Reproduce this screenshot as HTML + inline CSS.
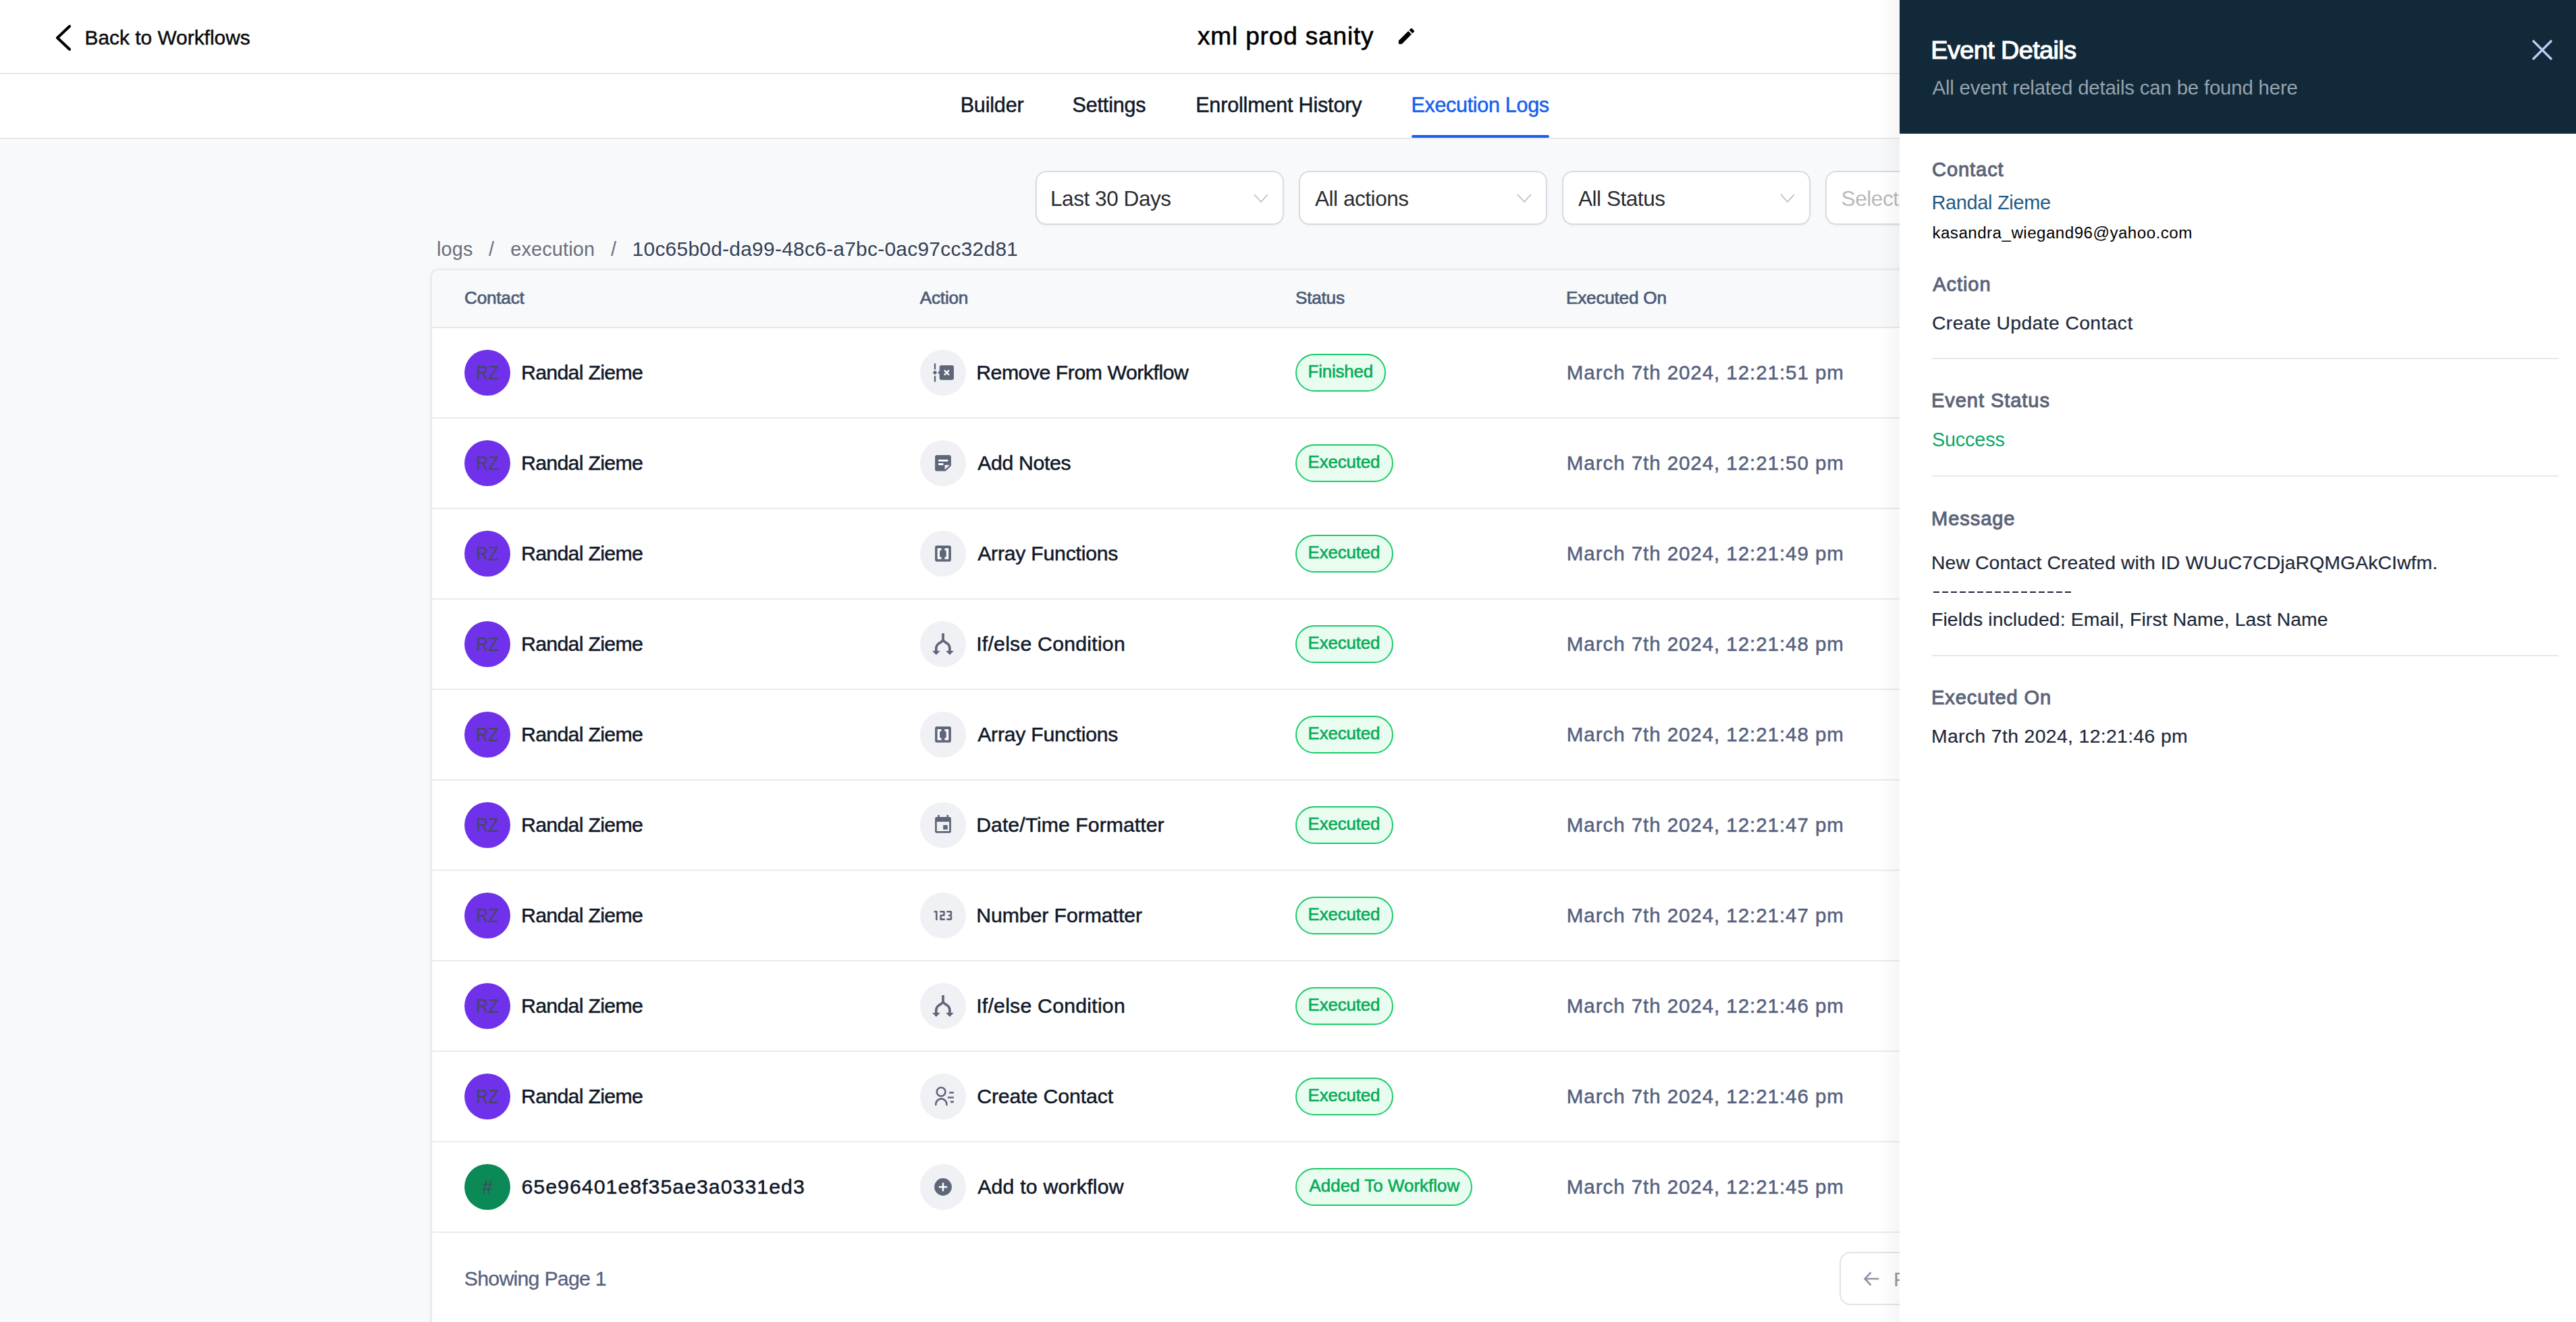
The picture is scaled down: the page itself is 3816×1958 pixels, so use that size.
<!DOCTYPE html>
<html><head><meta charset="utf-8"><title>Execution Logs</title>
<style>
html,body{margin:0;padding:0;width:3816px;height:1958px;overflow:hidden;background:#f8f9fb;font-family:"Liberation Sans",sans-serif;position:relative}
.t{position:absolute;white-space:nowrap}
.a{position:absolute}
.rowb{position:absolute;left:640px;width:2200px;height:2px;background:#e8eaee}
.av{position:absolute;left:688px;width:68px;height:68px;border-radius:50%}
.ic{position:absolute;left:1363px;width:68px;height:68px;border-radius:50%;background:#f0f1f4}
.ic svg{display:block}
.badge{position:absolute;left:1919px;height:52px;border:2px solid #1ccb68;background:#e8fcf0;border-radius:28px}
.sel{position:absolute;top:253px;width:364px;height:76px;border:2px solid #d9dbe2;border-radius:16px;background:#fff;box-shadow:0 2px 3px rgba(16,24,40,0.04)}
.chev{position:absolute;top:286px}
.pdiv{position:absolute;left:2862px;width:928px;height:2px;background:#e6e8ec}
</style></head><body>
<div class="a" style="left:0;top:0;width:3816px;height:108px;background:#fff;border-bottom:2px solid #e6e8ec"></div>
<div class="a" style="left:0;top:110px;width:3816px;height:94px;background:#fff;border-bottom:2px solid #e6e8ec"></div>
<div class="a" style="left:2091px;top:200px;width:204px;height:4px;background:#155eef;border-radius:2px"></div>
<svg class="a" style="left:80px;top:34px" width="30" height="44" viewBox="0 0 30 44"><path d="M23 5 L5 22 L23 39" stroke="#000" stroke-width="4.2" fill="none" stroke-linecap="round" stroke-linejoin="round"/></svg>
<svg class="a" style="left:2068px;top:38px" width="31" height="31" viewBox="0 0 24 24"><path fill="#000" d="M3 17.25V21h3.75L17.81 9.94l-3.75-3.75L3 17.25zM20.71 7.04a.996.996 0 000-1.41l-2.34-2.34a.996.996 0 00-1.41 0l-1.83 1.83 3.75 3.75 1.83-1.83z"/></svg>
<div class="sel" style="left:1534px"></div>
<div class="sel" style="left:1924px"></div>
<div class="sel" style="left:2314px"></div>
<div class="sel" style="left:2704px"></div>
<svg class="chev" style="left:1856px" width="24" height="16" viewBox="0 0 24 16"><path d="M2 2 L12 13 L22 2" stroke="#bcbec4" stroke-width="1.8" fill="none"/></svg>
<svg class="chev" style="left:2246px" width="24" height="16" viewBox="0 0 24 16"><path d="M2 2 L12 13 L22 2" stroke="#bcbec4" stroke-width="1.8" fill="none"/></svg>
<svg class="chev" style="left:2636px" width="24" height="16" viewBox="0 0 24 16"><path d="M2 2 L12 13 L22 2" stroke="#bcbec4" stroke-width="1.8" fill="none"/></svg>
<div class="a" style="left:638px;top:398px;width:2400px;height:1700px;border:2px solid #e6e8ec;border-radius:12px;background:#fff;box-shadow:0 1px 6px rgba(16,24,40,0.06);overflow:hidden">
  <div class="a" style="left:0;top:0;width:2400px;height:84px;background:#f8f9fb;border-bottom:2px solid #e6e8ec"></div>
</div>
<div class="rowb" style="top:618px"></div>
<div class="av" style="top:518px;background:#6f31ea"></div>
<div class="ic" style="top:518px"><svg width="68" height="68" viewBox="0 0 68 68"><line x1="22" y1="21.2" x2="22" y2="28.3" stroke="#5e667a" stroke-width="2.4" stroke-linecap="round"/>
<line x1="22" y1="39.6" x2="22" y2="46.6" stroke="#5e667a" stroke-width="2.4" stroke-linecap="round"/>
<circle cx="22" cy="33.8" r="2.6" fill="#5e667a"/>
<path d="M31.6 22.9 H47 Q50 22.9 50 25.9 V41.8 Q50 44.8 47 44.8 H31.6 Q28.7 44.8 28.7 41.8 V36.3 L26.2 33.8 L28.7 31.3 V25.9 Q28.7 22.9 31.6 22.9 Z" fill="#5e667a"/>
<path d="M35.9 30.4 L43 37.5 M43 30.4 L35.9 37.5" stroke="#fff" stroke-width="2.4" stroke-linecap="butt"/></svg></div>
<div class="badge" style="top:524px;width:130px"></div>
<div class="rowb" style="top:752px"></div>
<div class="av" style="top:652px;background:#6f31ea"></div>
<div class="ic" style="top:652px"><svg width="68" height="68" viewBox="0 0 68 68"><path d="M25 22.1 H43 Q45.9 22.1 45.9 25 V37.8 L37.8 45.8 H25 Q22.1 45.8 22.1 42.9 V25 Q22.1 22.1 25 22.1 Z" fill="#5e667a"/>
<path d="M28.2 30.1 H40.3 M28.2 35.5 H33.4" stroke="#fff" stroke-width="2.8" stroke-linecap="round"/>
<path d="M36.6 36.8 H43.8 L36.6 43.6 Z" fill="#fff"/></svg></div>
<div class="badge" style="top:658px;width:141px"></div>
<div class="rowb" style="top:886px"></div>
<div class="av" style="top:786px;background:#6f31ea"></div>
<div class="ic" style="top:786px"><svg width="68" height="68" viewBox="0 0 68 68"><rect x="22.1" y="22.1" width="23.8" height="23.6" rx="2.6" fill="#5e667a"/>
<rect x="25.7" y="26" width="16.5" height="16.2" fill="#fff"/>
<rect x="31.4" y="26" width="5.1" height="16.2" fill="#5e667a"/>
<rect x="29" y="29.3" width="9.8" height="9.5" fill="#5e667a"/></svg></div>
<div class="badge" style="top:792px;width:141px"></div>
<div class="rowb" style="top:1020px"></div>
<div class="av" style="top:920px;background:#6f31ea"></div>
<div class="ic" style="top:920px"><svg width="68" height="68" viewBox="0 0 68 68"><path d="M34 18 V27 C34 29.5 31 31 28.5 32.5 C25.4 34.4 23.8 36.6 23.8 40.5 V45.5 M34 27 C34 29.5 37 31 39.5 32.5 C42.6 34.4 43.9 36.6 43.9 40.5 V45.5" stroke="#5e667a" stroke-width="3.7" fill="none"/>
<path d="M18 44.1 H29.7 L23.85 50 Z M38.1 44.1 H49.8 L43.95 50 Z" fill="#5e667a"/></svg></div>
<div class="badge" style="top:926px;width:141px"></div>
<div class="rowb" style="top:1154px"></div>
<div class="av" style="top:1054px;background:#6f31ea"></div>
<div class="ic" style="top:1054px"><svg width="68" height="68" viewBox="0 0 68 68"><rect x="22.1" y="22.1" width="23.8" height="23.6" rx="2.6" fill="#5e667a"/>
<rect x="25.7" y="26" width="16.5" height="16.2" fill="#fff"/>
<rect x="31.4" y="26" width="5.1" height="16.2" fill="#5e667a"/>
<rect x="29" y="29.3" width="9.8" height="9.5" fill="#5e667a"/></svg></div>
<div class="badge" style="top:1060px;width:141px"></div>
<div class="rowb" style="top:1288px"></div>
<div class="av" style="top:1188px;background:#6f31ea"></div>
<div class="ic" style="top:1188px"><svg width="68" height="68" viewBox="0 0 68 68"><rect x="22.1" y="22.1" width="23.8" height="23.6" rx="2.6" fill="#5e667a"/>
<rect x="24.8" y="29.1" width="18.3" height="13.9" fill="#f0f1f4"/>
<rect x="34.2" y="34" width="6.5" height="6.6" fill="#5e667a"/>
<rect x="26.2" y="19" width="2.6" height="4" fill="#5e667a"/>
<rect x="39.4" y="19" width="2.6" height="4" fill="#5e667a"/></svg></div>
<div class="badge" style="top:1194px;width:141px"></div>
<div class="rowb" style="top:1422px"></div>
<div class="av" style="top:1322px;background:#6f31ea"></div>
<div class="ic" style="top:1322px"><svg width="68" height="68" viewBox="0 0 68 68"><path d="M20.6 27 H25.6 V40.9 H23 V29.6 H20.6 Z" fill="#5e667a"/>
<path d="M29.3 27 H35 Q36.8 27 36.8 28.8 V33.3 Q36.8 35 35 35 H31.9 V38.3 H36.8 V40.9 H29.3 V34.2 Q29.3 32.4 31.1 32.4 H34.2 V29.6 H29.3 Z" fill="#5e667a"/>
<path d="M39.4 27 H45.5 Q47.3 27 47.3 28.8 V32.6 L46.5 33.9 L47.3 35.2 V39.1 Q47.3 40.9 45.5 40.9 H39.4 V38.3 H44.7 V35.2 H42.2 V32.6 H44.7 V29.6 H39.4 Z" fill="#5e667a"/></svg></div>
<div class="badge" style="top:1328px;width:141px"></div>
<div class="rowb" style="top:1556px"></div>
<div class="av" style="top:1456px;background:#6f31ea"></div>
<div class="ic" style="top:1456px"><svg width="68" height="68" viewBox="0 0 68 68"><path d="M34 18 V27 C34 29.5 31 31 28.5 32.5 C25.4 34.4 23.8 36.6 23.8 40.5 V45.5 M34 27 C34 29.5 37 31 39.5 32.5 C42.6 34.4 43.9 36.6 43.9 40.5 V45.5" stroke="#5e667a" stroke-width="3.7" fill="none"/>
<path d="M18 44.1 H29.7 L23.85 50 Z M38.1 44.1 H49.8 L43.95 50 Z" fill="#5e667a"/></svg></div>
<div class="badge" style="top:1462px;width:141px"></div>
<div class="rowb" style="top:1690px"></div>
<div class="av" style="top:1590px;background:#6f31ea"></div>
<div class="ic" style="top:1590px"><svg width="68" height="68" viewBox="0 0 68 68"><circle cx="31.1" cy="27.1" r="6.4" stroke="#5e667a" stroke-width="2.6" fill="none"/>
<path d="M23.3 46.2 V45.4 A8.05 8.05 0 0 1 39.4 45.4 V46.2" stroke="#5e667a" stroke-width="2.6" fill="none" stroke-linecap="round"/>
<path d="M43.2 28.3 H49.9 M40.9 35.5 H49.9 M45 41.9 H49.9" stroke="#5e667a" stroke-width="2.6"/></svg></div>
<div class="badge" style="top:1596px;width:141px"></div>
<div class="rowb" style="top:1824px"></div>
<div class="av" style="top:1724px;background:#0b8a58"></div>
<div class="ic" style="top:1724px"><svg width="68" height="68" viewBox="0 0 68 68"><circle cx="34" cy="34" r="12.9" fill="#5e667a"/>
<path d="M27.8 34 H40.2 M34 27.8 V40.2" stroke="#fff" stroke-width="2.5"/></svg></div>
<div class="badge" style="top:1730px;width:258px"></div>
<div class="a" style="left:2725px;top:1854px;width:300px;height:75px;border:2px solid #e0e3e8;border-radius:16px;background:#fff"></div>
<svg class="a" style="left:2758px;top:1880px" width="30" height="28" viewBox="0 0 30 28"><path d="M25.4 14 H5 M13.5 4.5 L4.5 14 L13.5 23.5" stroke="#8d95a4" stroke-width="2.6" fill="none"/></svg>
<span class="t" style="left:2805px;top:1880px;font-size:30px;line-height:30px;color:#8d95a4">Previous</span>
<span class="t" style="left:125.60px;top:41.20px;font-size:29.80px;line-height:29.80px;color:#0c0c0d;letter-spacing:0.032px;-webkit-text-stroke:0.5px #0c0c0d">Back to Workflows</span>
<span class="t" style="left:1774.00px;top:35.20px;font-size:36.99px;line-height:36.99px;color:#000000;letter-spacing:0.849px;-webkit-text-stroke:0.6px #000000">xml prod sanity</span>
<span class="t" style="left:1422.70px;top:140.20px;font-size:30.52px;line-height:30.52px;color:#101828;letter-spacing:-0.178px;-webkit-text-stroke:0.5px #101828">Builder</span>
<span class="t" style="left:1588.60px;top:140.20px;font-size:30.52px;line-height:30.52px;color:#101828;letter-spacing:-0.178px;-webkit-text-stroke:0.5px #101828">Settings</span>
<span class="t" style="left:1771.20px;top:140.20px;font-size:30.52px;line-height:30.52px;color:#101828;letter-spacing:-0.178px;-webkit-text-stroke:0.5px #101828">Enrollment History</span>
<span class="t" style="left:2090.40px;top:140.20px;font-size:30.52px;line-height:30.52px;color:#155eef;letter-spacing:-0.308px;-webkit-text-stroke:0.5px #155eef">Execution Logs</span>
<span class="t" style="left:1556.00px;top:279.20px;font-size:31.54px;line-height:31.54px;color:#2a2c31;letter-spacing:-0.451px">Last 30 Days</span>
<span class="t" style="left:1947.90px;top:279.20px;font-size:31.54px;line-height:31.54px;color:#2a2c31;letter-spacing:-0.451px">All actions</span>
<span class="t" style="left:2337.90px;top:279.20px;font-size:31.54px;line-height:31.54px;color:#2a2c31;letter-spacing:-0.451px">All Status</span>
<span class="t" style="left:2727.60px;top:279.20px;font-size:31.54px;line-height:31.54px;color:#b9b9bb;letter-spacing:-0.451px">Select</span>
<span class="t" style="left:646.90px;top:355.00px;font-size:28.71px;line-height:28.71px;color:#686f7b;letter-spacing:0.231px">logs</span>
<span class="t" style="left:724.00px;top:355.00px;font-size:28.71px;line-height:28.71px;color:#686f7b;letter-spacing:0.231px">/</span>
<span class="t" style="left:756.30px;top:355.00px;font-size:28.71px;line-height:28.71px;color:#686f7b;letter-spacing:0.231px">execution</span>
<span class="t" style="left:905.00px;top:355.00px;font-size:28.71px;line-height:28.71px;color:#686f7b;letter-spacing:0.231px">/</span>
<span class="t" style="left:936.60px;top:354.10px;font-size:29.80px;line-height:29.80px;color:#344054;letter-spacing:0.323px">10c65b0d-da99-48c6-a7bc-0ac97cc32d81</span>
<span class="t" style="left:688.00px;top:428.10px;font-size:26.16px;line-height:26.16px;color:#4d5a75;letter-spacing:-0.227px;-webkit-text-stroke:0.7px #4d5a75">Contact</span>
<span class="t" style="left:1362.80px;top:428.10px;font-size:26.16px;line-height:26.16px;color:#4d5a75;letter-spacing:-0.227px;-webkit-text-stroke:0.7px #4d5a75">Action</span>
<span class="t" style="left:1919.00px;top:428.10px;font-size:26.16px;line-height:26.16px;color:#4d5a75;letter-spacing:-0.227px;-webkit-text-stroke:0.7px #4d5a75">Status</span>
<span class="t" style="left:2320.00px;top:428.10px;font-size:26.16px;line-height:26.16px;color:#4d5a75;letter-spacing:-0.227px;-webkit-text-stroke:0.7px #4d5a75">Executed On</span>
<span class="t" style="left:772.00px;top:537.00px;font-size:30.23px;line-height:30.23px;color:#101828;letter-spacing:-0.673px;-webkit-text-stroke:0.5px #101828">Randal Zieme</span>
<span class="t" style="left:704.70px;top:536.70px;font-size:29.51px;line-height:29.51px;color:#424a57;letter-spacing:0.000px;transform:scaleX(0.8525);transform-origin:0 0">RZ</span>
<span class="t" style="left:1446.20px;top:537.00px;font-size:30.23px;line-height:30.23px;color:#101828;letter-spacing:-0.468px;-webkit-text-stroke:0.5px #101828">Remove From Workflow</span>
<span class="t" style="left:2320.80px;top:537.00px;font-size:29.51px;line-height:29.51px;color:#56617e;letter-spacing:0.949px;-webkit-text-stroke:0.5px #56617e">March 7th 2024, 12:21:51 pm</span>
<span class="t" style="left:1937.50px;top:538.20px;font-size:25.87px;line-height:25.87px;color:#06ab57;letter-spacing:-0.166px;-webkit-text-stroke:0.6px #06ab57">Finished</span>
<span class="t" style="left:772.00px;top:671.00px;font-size:30.23px;line-height:30.23px;color:#101828;letter-spacing:-0.673px;-webkit-text-stroke:0.5px #101828">Randal Zieme</span>
<span class="t" style="left:704.70px;top:670.70px;font-size:29.51px;line-height:29.51px;color:#424a57;letter-spacing:0.000px;transform:scaleX(0.8525);transform-origin:0 0">RZ</span>
<span class="t" style="left:1448.20px;top:671.00px;font-size:30.23px;line-height:30.23px;color:#101828;letter-spacing:-0.349px;-webkit-text-stroke:0.5px #101828">Add Notes</span>
<span class="t" style="left:2320.80px;top:671.00px;font-size:29.51px;line-height:29.51px;color:#56617e;letter-spacing:0.949px;-webkit-text-stroke:0.5px #56617e">March 7th 2024, 12:21:50 pm</span>
<span class="t" style="left:1937.50px;top:672.20px;font-size:25.87px;line-height:25.87px;color:#06ab57;letter-spacing:-0.120px;-webkit-text-stroke:0.6px #06ab57">Executed</span>
<span class="t" style="left:772.00px;top:805.00px;font-size:30.23px;line-height:30.23px;color:#101828;letter-spacing:-0.673px;-webkit-text-stroke:0.5px #101828">Randal Zieme</span>
<span class="t" style="left:704.70px;top:804.70px;font-size:29.51px;line-height:29.51px;color:#424a57;letter-spacing:0.000px;transform:scaleX(0.8525);transform-origin:0 0">RZ</span>
<span class="t" style="left:1448.20px;top:805.00px;font-size:30.23px;line-height:30.23px;color:#101828;letter-spacing:-0.243px;-webkit-text-stroke:0.5px #101828">Array Functions</span>
<span class="t" style="left:2320.80px;top:805.00px;font-size:29.51px;line-height:29.51px;color:#56617e;letter-spacing:0.949px;-webkit-text-stroke:0.5px #56617e">March 7th 2024, 12:21:49 pm</span>
<span class="t" style="left:1937.50px;top:806.20px;font-size:25.87px;line-height:25.87px;color:#06ab57;letter-spacing:-0.120px;-webkit-text-stroke:0.6px #06ab57">Executed</span>
<span class="t" style="left:772.00px;top:939.00px;font-size:30.23px;line-height:30.23px;color:#101828;letter-spacing:-0.673px;-webkit-text-stroke:0.5px #101828">Randal Zieme</span>
<span class="t" style="left:704.70px;top:938.70px;font-size:29.51px;line-height:29.51px;color:#424a57;letter-spacing:0.000px;transform:scaleX(0.8525);transform-origin:0 0">RZ</span>
<span class="t" style="left:1446.20px;top:939.00px;font-size:30.23px;line-height:30.23px;color:#101828;letter-spacing:0.238px;-webkit-text-stroke:0.5px #101828">If/else Condition</span>
<span class="t" style="left:2320.80px;top:939.00px;font-size:29.51px;line-height:29.51px;color:#56617e;letter-spacing:0.949px;-webkit-text-stroke:0.5px #56617e">March 7th 2024, 12:21:48 pm</span>
<span class="t" style="left:1937.50px;top:940.20px;font-size:25.87px;line-height:25.87px;color:#06ab57;letter-spacing:-0.120px;-webkit-text-stroke:0.6px #06ab57">Executed</span>
<span class="t" style="left:772.00px;top:1073.00px;font-size:30.23px;line-height:30.23px;color:#101828;letter-spacing:-0.673px;-webkit-text-stroke:0.5px #101828">Randal Zieme</span>
<span class="t" style="left:704.70px;top:1072.70px;font-size:29.51px;line-height:29.51px;color:#424a57;letter-spacing:0.000px;transform:scaleX(0.8525);transform-origin:0 0">RZ</span>
<span class="t" style="left:1448.20px;top:1073.00px;font-size:30.23px;line-height:30.23px;color:#101828;letter-spacing:-0.243px;-webkit-text-stroke:0.5px #101828">Array Functions</span>
<span class="t" style="left:2320.80px;top:1073.00px;font-size:29.51px;line-height:29.51px;color:#56617e;letter-spacing:0.949px;-webkit-text-stroke:0.5px #56617e">March 7th 2024, 12:21:48 pm</span>
<span class="t" style="left:1937.50px;top:1074.20px;font-size:25.87px;line-height:25.87px;color:#06ab57;letter-spacing:-0.120px;-webkit-text-stroke:0.6px #06ab57">Executed</span>
<span class="t" style="left:772.00px;top:1207.00px;font-size:30.23px;line-height:30.23px;color:#101828;letter-spacing:-0.673px;-webkit-text-stroke:0.5px #101828">Randal Zieme</span>
<span class="t" style="left:704.70px;top:1206.70px;font-size:29.51px;line-height:29.51px;color:#424a57;letter-spacing:0.000px;transform:scaleX(0.8525);transform-origin:0 0">RZ</span>
<span class="t" style="left:1446.20px;top:1207.00px;font-size:30.23px;line-height:30.23px;color:#101828;letter-spacing:0.047px;-webkit-text-stroke:0.5px #101828">Date/Time Formatter</span>
<span class="t" style="left:2320.80px;top:1207.00px;font-size:29.51px;line-height:29.51px;color:#56617e;letter-spacing:0.949px;-webkit-text-stroke:0.5px #56617e">March 7th 2024, 12:21:47 pm</span>
<span class="t" style="left:1937.50px;top:1208.20px;font-size:25.87px;line-height:25.87px;color:#06ab57;letter-spacing:-0.120px;-webkit-text-stroke:0.6px #06ab57">Executed</span>
<span class="t" style="left:772.00px;top:1341.00px;font-size:30.23px;line-height:30.23px;color:#101828;letter-spacing:-0.673px;-webkit-text-stroke:0.5px #101828">Randal Zieme</span>
<span class="t" style="left:704.70px;top:1340.70px;font-size:29.51px;line-height:29.51px;color:#424a57;letter-spacing:0.000px;transform:scaleX(0.8525);transform-origin:0 0">RZ</span>
<span class="t" style="left:1446.20px;top:1341.00px;font-size:30.23px;line-height:30.23px;color:#101828;letter-spacing:-0.065px;-webkit-text-stroke:0.5px #101828">Number Formatter</span>
<span class="t" style="left:2320.80px;top:1341.00px;font-size:29.51px;line-height:29.51px;color:#56617e;letter-spacing:0.949px;-webkit-text-stroke:0.5px #56617e">March 7th 2024, 12:21:47 pm</span>
<span class="t" style="left:1937.50px;top:1342.20px;font-size:25.87px;line-height:25.87px;color:#06ab57;letter-spacing:-0.120px;-webkit-text-stroke:0.6px #06ab57">Executed</span>
<span class="t" style="left:772.00px;top:1475.00px;font-size:30.23px;line-height:30.23px;color:#101828;letter-spacing:-0.673px;-webkit-text-stroke:0.5px #101828">Randal Zieme</span>
<span class="t" style="left:704.70px;top:1474.70px;font-size:29.51px;line-height:29.51px;color:#424a57;letter-spacing:0.000px;transform:scaleX(0.8525);transform-origin:0 0">RZ</span>
<span class="t" style="left:1446.20px;top:1475.00px;font-size:30.23px;line-height:30.23px;color:#101828;letter-spacing:0.238px;-webkit-text-stroke:0.5px #101828">If/else Condition</span>
<span class="t" style="left:2320.80px;top:1475.00px;font-size:29.51px;line-height:29.51px;color:#56617e;letter-spacing:0.949px;-webkit-text-stroke:0.5px #56617e">March 7th 2024, 12:21:46 pm</span>
<span class="t" style="left:1937.50px;top:1476.20px;font-size:25.87px;line-height:25.87px;color:#06ab57;letter-spacing:-0.120px;-webkit-text-stroke:0.6px #06ab57">Executed</span>
<span class="t" style="left:772.00px;top:1609.00px;font-size:30.23px;line-height:30.23px;color:#101828;letter-spacing:-0.673px;-webkit-text-stroke:0.5px #101828">Randal Zieme</span>
<span class="t" style="left:704.70px;top:1608.70px;font-size:29.51px;line-height:29.51px;color:#424a57;letter-spacing:0.000px;transform:scaleX(0.8525);transform-origin:0 0">RZ</span>
<span class="t" style="left:1447.20px;top:1609.00px;font-size:30.23px;line-height:30.23px;color:#101828;letter-spacing:-0.103px;-webkit-text-stroke:0.5px #101828">Create Contact</span>
<span class="t" style="left:2320.80px;top:1609.00px;font-size:29.51px;line-height:29.51px;color:#56617e;letter-spacing:0.949px;-webkit-text-stroke:0.5px #56617e">March 7th 2024, 12:21:46 pm</span>
<span class="t" style="left:1937.50px;top:1610.20px;font-size:25.87px;line-height:25.87px;color:#06ab57;letter-spacing:-0.120px;-webkit-text-stroke:0.6px #06ab57">Executed</span>
<span class="t" style="left:772.50px;top:1743.00px;font-size:30.23px;line-height:30.23px;color:#101828;letter-spacing:1.055px;-webkit-text-stroke:0.5px #101828">65e96401e8f35ae3a0331ed3</span>
<span class="t" style="left:713.70px;top:1742.80px;font-size:29.51px;line-height:29.51px;color:#424a57;letter-spacing:0.000px;transform:scaleX(0.9824);transform-origin:0 0">#</span>
<span class="t" style="left:1448.20px;top:1743.00px;font-size:30.23px;line-height:30.23px;color:#101828;letter-spacing:0.216px;-webkit-text-stroke:0.5px #101828">Add to workflow</span>
<span class="t" style="left:2320.80px;top:1743.00px;font-size:29.51px;line-height:29.51px;color:#56617e;letter-spacing:0.949px;-webkit-text-stroke:0.5px #56617e">March 7th 2024, 12:21:45 pm</span>
<span class="t" style="left:1939.50px;top:1744.20px;font-size:25.87px;line-height:25.87px;color:#06ab57;letter-spacing:0.054px;-webkit-text-stroke:0.6px #06ab57">Added To Workflow</span>
<span class="t" style="left:687.80px;top:1879.20px;font-size:30.23px;line-height:30.23px;color:#56617e;letter-spacing:-0.714px;-webkit-text-stroke:0.3px #56617e">Showing Page 1</span>
<div class="a" style="left:2784px;top:0;width:30px;height:1958px;background:linear-gradient(to right,rgba(0,0,0,0),rgba(0,0,0,0.035))"></div>
<div class="a" style="left:2814px;top:0;width:1002px;height:1958px;background:#fff"></div>
<div class="a" style="left:2814px;top:0;width:1002px;height:198px;background:#122939"></div>
<svg class="a" style="left:3748px;top:56px" width="36" height="36" viewBox="0 0 36 36"><path d="M4 4 L32 32 M32 4 L4 32" stroke="#c3cbf4" stroke-width="3.2"/></svg>
<div class="pdiv" style="top:530px"></div>
<div class="pdiv" style="top:704px"></div>
<div class="pdiv" style="top:970px"></div>
<div class="a" style="left:2863.5px;top:875.7px;width:204px;height:2.4px;background:repeating-linear-gradient(to right,#1d2939 0,#1d2939 9.4px,transparent 9.4px,transparent 12.98px)"></div>
<span class="t" style="left:2860.30px;top:55.90px;font-size:37.79px;line-height:37.79px;color:#ffffff;letter-spacing:-0.567px;-webkit-text-stroke:1.2px #ffffff">Event Details</span>
<span class="t" style="left:2862.50px;top:115.20px;font-size:29.36px;line-height:29.36px;color:#95a3ae;letter-spacing:-0.169px">All event related details can be found here</span>
<span class="t" style="left:2862.00px;top:237.10px;font-size:29.07px;line-height:29.07px;color:#5b6478;letter-spacing:0.923px;-webkit-text-stroke:1.0px #5b6478">Contact</span>
<span class="t" style="left:2861.40px;top:285.70px;font-size:28.92px;line-height:28.92px;color:#225a83;letter-spacing:-0.297px">Randal Zieme</span>
<span class="t" style="left:2862.40px;top:332.90px;font-size:24.15px;line-height:24.15px;color:#000000;letter-spacing:0.474px">kasandra_wiegand96@yahoo.com</span>
<span class="t" style="left:2863.20px;top:406.80px;font-size:29.07px;line-height:29.07px;color:#5b6478;letter-spacing:0.923px;-webkit-text-stroke:1.0px #5b6478">Action</span>
<span class="t" style="left:2862.00px;top:463.60px;font-size:28.34px;line-height:28.34px;color:#1d2939;letter-spacing:0.376px;-webkit-text-stroke:0.2px #1d2939">Create Update Contact</span>
<span class="t" style="left:2861.00px;top:578.80px;font-size:29.07px;line-height:29.07px;color:#5b6478;letter-spacing:0.923px;-webkit-text-stroke:1.0px #5b6478">Event Status</span>
<span class="t" style="left:2862.00px;top:637.00px;font-size:28.78px;line-height:28.78px;color:#0aa864;letter-spacing:-0.155px">Success</span>
<span class="t" style="left:2861.00px;top:753.90px;font-size:29.07px;line-height:29.07px;color:#5b6478;letter-spacing:0.923px;-webkit-text-stroke:1.0px #5b6478">Message</span>
<span class="t" style="left:2861.00px;top:818.50px;font-size:28.34px;line-height:28.34px;color:#1d2939;letter-spacing:0.117px;-webkit-text-stroke:0.2px #1d2939">New Contact Created with ID WUuC7CDjaRQMGAkCIwfm.</span>
<span class="t" style="left:2861.00px;top:903.00px;font-size:28.34px;line-height:28.34px;color:#1d2939;letter-spacing:0.115px;-webkit-text-stroke:0.2px #1d2939">Fields included: Email, First Name, Last Name</span>
<span class="t" style="left:2861.00px;top:1018.80px;font-size:29.07px;line-height:29.07px;color:#5b6478;letter-spacing:0.923px;-webkit-text-stroke:1.0px #5b6478">Executed On</span>
<span class="t" style="left:2861.00px;top:1076.20px;font-size:28.34px;line-height:28.34px;color:#1d2939;letter-spacing:0.370px;-webkit-text-stroke:0.2px #1d2939">March 7th 2024, 12:21:46 pm</span>
</body></html>
